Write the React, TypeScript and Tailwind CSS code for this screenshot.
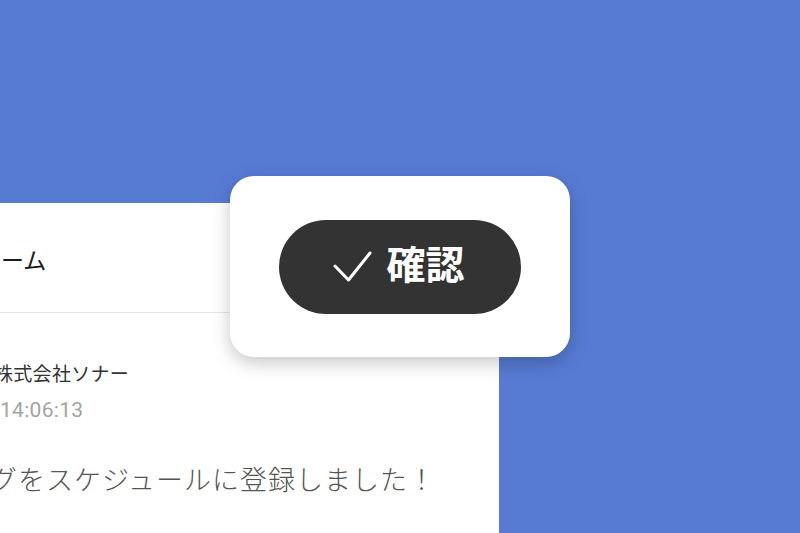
import { useState } from "react";

// Confirm popup floating over a chat timeline card
export default function App() {
  const [confirmed, setConfirmed] = useState(false);

  return (
    <div className="relative h-[533px] w-[800px] overflow-hidden bg-[#577bd3] font-['Roboto','Noto_Sans_CJK_JP',sans-serif]">
      {/* timeline card, cut off at the left edge */}
      <div className="mt-[203px] h-[330px] w-[499px] bg-white">
        <div className="flex h-[110px] items-center border-b border-[#e6e6e6] pl-[1px] pt-[10px]">
          <span className="text-[23px] text-[#1a1a1a]">ーム</span>
        </div>
        <div className="relative pt-[51px]">
          <div className="ml-[-6px] flex h-[22px] items-center text-[19px] tracking-[0.3px] text-[#333]">
            株式会社ソナー
          </div>
          <div className="mt-[13px] flex h-[24px] items-center text-[21px] tracking-[0.3px] text-[#a3a3a3]">
            14:06:13
          </div>
          <div className="mt-[43px] ml-[-10px] flex h-[30px] items-center text-[27px] font-light tracking-[1px] text-[#555]">
            グをスケジュールに登録しました！
          </div>
          <div className="absolute right-[36px] top-[29px] flex gap-[2px]">
            <span className="h-[5px] w-[5px] rounded-full bg-[#b0b0b0]" />
            <span className="h-[5px] w-[5px] rounded-full bg-[#b0b0b0]" />
            <span className="h-[5px] w-[5px] rounded-full bg-[#b0b0b0]" />
          </div>
        </div>
      </div>

      {/* popup */}
      <div className="absolute left-[230px] top-[176px] flex h-[181px] w-[340px] items-center justify-center rounded-[24px] bg-white shadow-[0_6px_18px_rgba(0,0,0,0.22)]">
        <button
          type="button"
          onClick={() => setConfirmed((c) => !c)}
          className="flex h-[94px] w-[242px] items-center justify-center gap-[13px] rounded-full bg-[#333333] pr-[2px] text-white"
        >
          <svg width="40" height="34" viewBox="0 0 40 34" fill="none">
            <path
              d="M2 16 L15.5 30 L37 3"
              stroke="white"
              strokeWidth="3"
              strokeLinecap="round"
              strokeLinejoin="round"
            />
          </svg>
          <span className="text-[39px] font-bold leading-none">
            {confirmed ? "確認" : "確認"}
          </span>
        </button>
      </div>
    </div>
  );
}
